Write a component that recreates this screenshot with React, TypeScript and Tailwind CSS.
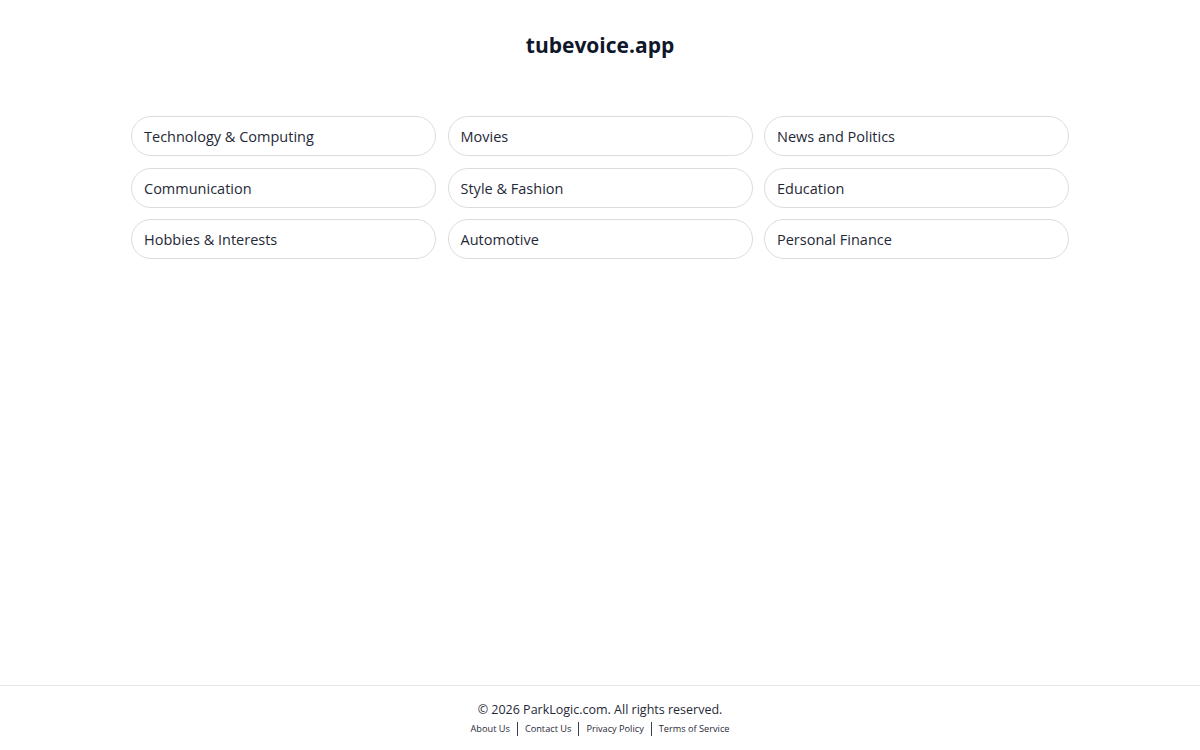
import React from "react";

const items = [
  "Technology & Computing",
  "Movies",
  "News and Politics",
  "Communication",
  "Style & Fashion",
  "Education",
  "Hobbies & Interests",
  "Automotive",
  "Personal Finance",
];

export default function App() {
  return (
    <div
      className="min-h-[750px] flex flex-col bg-white text-[#111827]"
      style={{ fontFamily: '"Open Sans", "Noto Sans", sans-serif' }}
    >
      <header className="pt-[29px] text-center">
        <h1 className="text-[21px] leading-[32px] font-bold text-[#0f172a]">tubevoice.app</h1>
      </header>
      <main className="flex-1 flex justify-center pt-[55px]">
        <div className="w-[938px] grid grid-cols-3 gap-x-[11.5px] gap-y-[11.5px] self-start">
          {items.map((t) => (
            <div
              key={t}
              className="h-[40px] rounded-full border border-[#dcdcdc] px-[12px] pt-[2px] flex items-center text-[14.5px] text-[#1f2937]"
            >
              {t}
            </div>
          ))}
        </div>
      </main>
      <footer className="h-[65px] border-t border-[#e5e7eb] flex flex-col items-center pt-[15px]">
        <p className="text-[12.5px] leading-[18px] text-[#1f2937]">© 2026 ParkLogic.com. All rights reserved.</p>
        <div className="flex items-center text-[9.2px] leading-[14px] text-[#1f2937] mt-[3px]">
          <span>About Us</span>
          <span className="mx-[7px] w-px h-[14px] bg-[#374151]" />
          <span>Contact Us</span>
          <span className="mx-[7px] w-px h-[14px] bg-[#374151]" />
          <span>Privacy Policy</span>
          <span className="mx-[7px] w-px h-[14px] bg-[#374151]" />
          <span>Terms of Service</span>
        </div>
      </footer>
    </div>
  );
}
